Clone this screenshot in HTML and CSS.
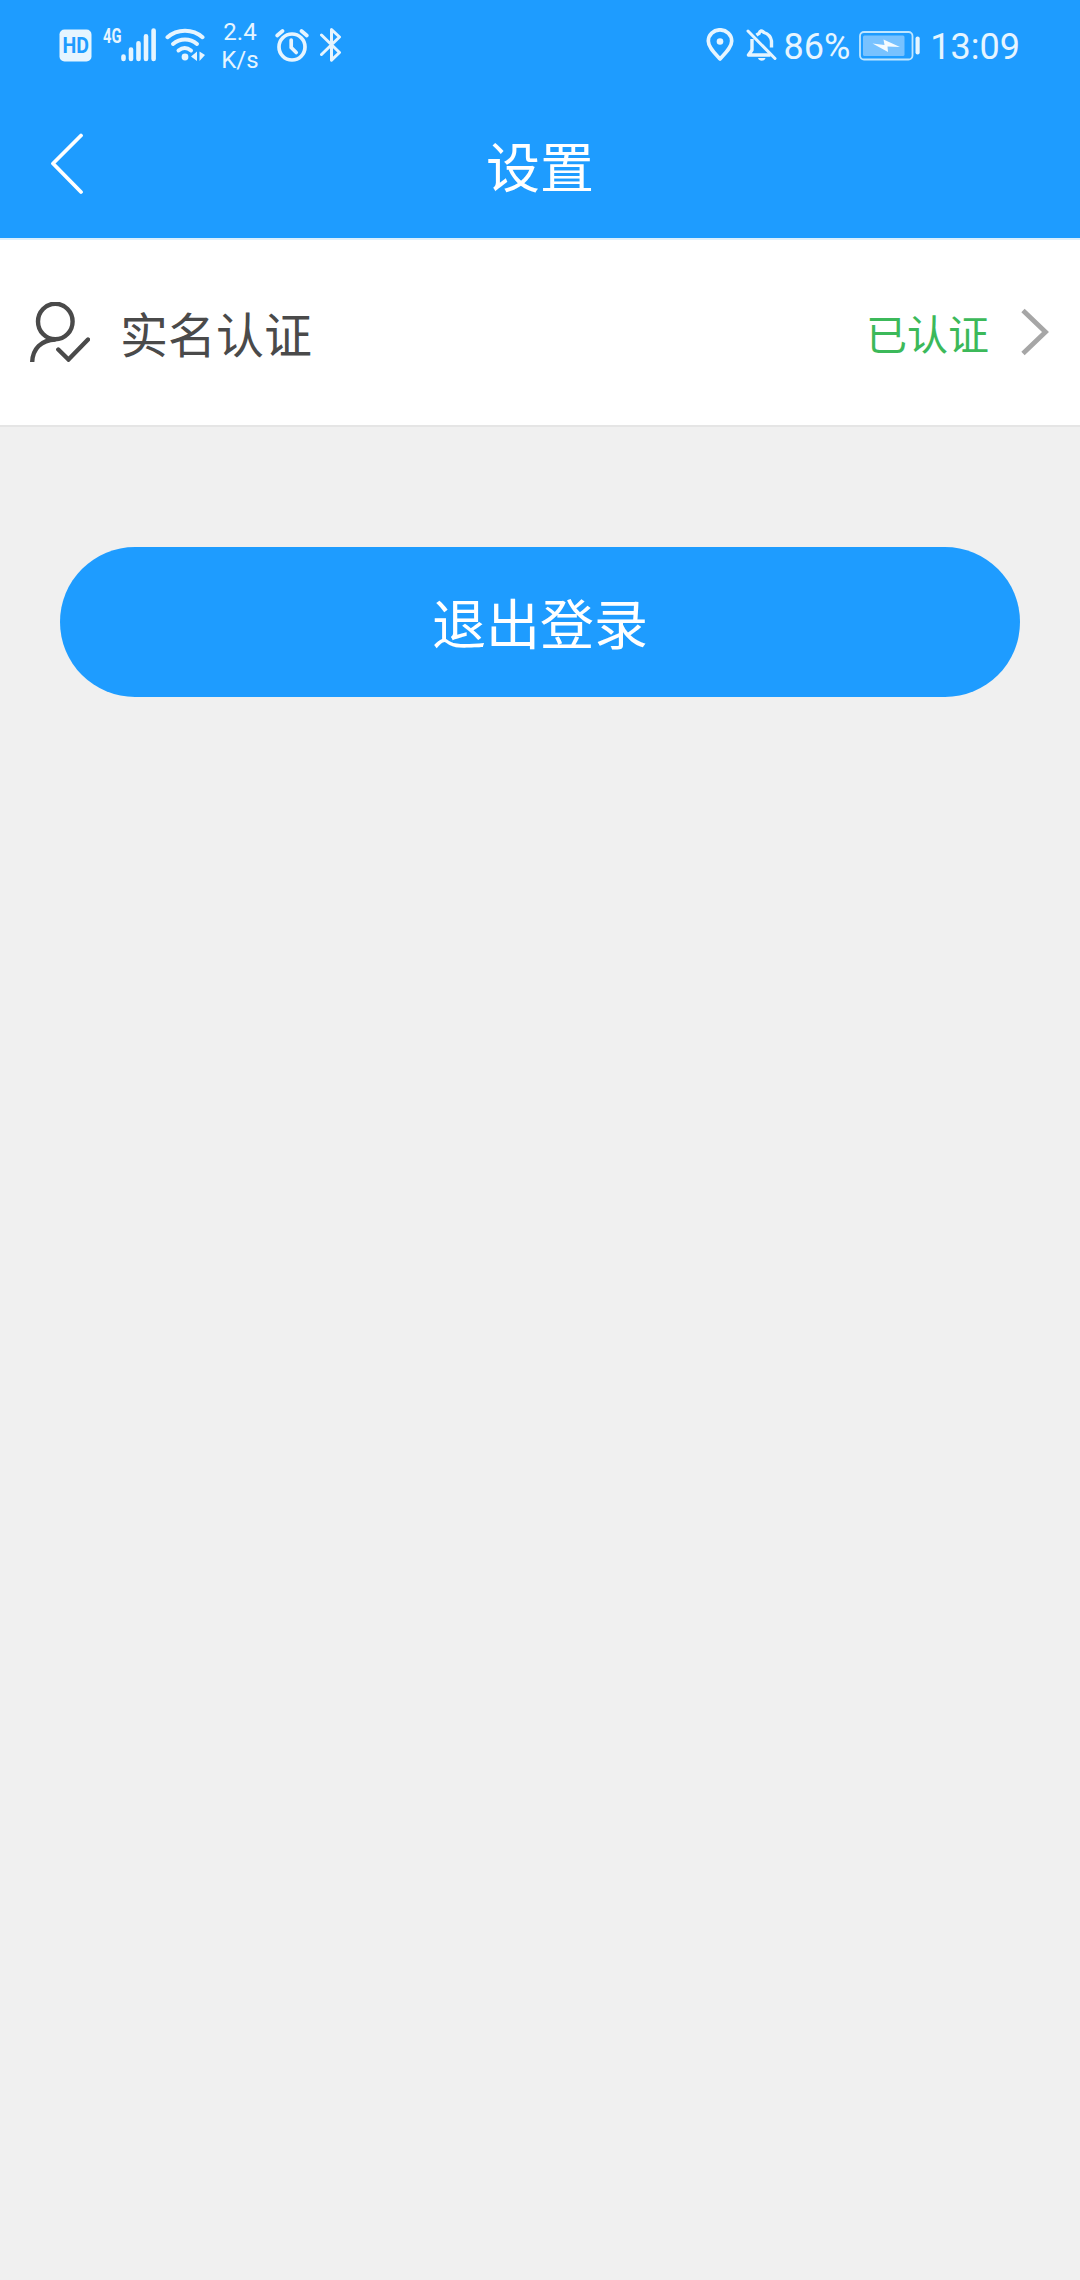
FILE: index.html
```
<!DOCTYPE html>
<html lang="zh-CN">
<head>
    <meta charset="UTF-8">
    <meta name="viewport" content="width=device-width, initial-scale=1.0">
    <title>设置</title>
    <link rel="stylesheet" href="styles.css">
</head>
<body>
    <header class="header">
        <div class="status-bar">
            <div class="status-left">
                <svg class="icon-hd" width="33" height="33" viewBox="0 0 33 33">
                    <rect x="0.5" y="0.5" width="32" height="32" rx="5" fill="#e6f5ff"/>
                    <text x="3.5" y="24" textLength="26.5" lengthAdjust="spacingAndGlyphs" class="hd-text">HD</text>
                </svg>
                <svg class="icon-signal" width="54" height="54" viewBox="0 -10 54 54">
                    <text x="0" y="14.5" textLength="18.5" lengthAdjust="spacingAndGlyphs" class="net-text">4G</text>
                    <g fill="none" stroke="#e6f5ff" stroke-width="4.6" stroke-linecap="round">
                        <path d="M20.5 28.5v2.5M28 21.5V31M35.5 15.2V31M43 8.2V31M50.6 2.5V31"/>
                    </g>
                </svg>
                <svg class="icon-wifi" width="40" height="34" viewBox="0 0 40 34">
                    <g fill="none" stroke="#e6f5ff" stroke-width="4" stroke-linecap="round">
                        <path d="M2.5 9.2C12 0.5 28 0.5 37.5 9.2"/>
                        <path d="M8 16C15 10 25 10 32 16"/>
                        <path d="M13.5 22.5C17.5 19.3 22 19.3 26 22.5"/>
                    </g>
                    <circle cx="20" cy="29" r="3.4" fill="#e6f5ff"/>
                    <path d="M26 28.5l6-5v9.5zM34.5 23.5l5.5 3.5-5.5 6z" fill="#e6f5ff"/>
                </svg>
                <div class="net-speed">
                    <span>2.4</span>
                    <span>K/s</span>
                </div>
                <svg class="icon-alarm" width="34" height="34" viewBox="0 0 34 34">
                    <g fill="none" stroke="#e6f5ff" stroke-width="3.7">
                        <circle cx="17" cy="19" r="13"/>
                        <path d="M2.2 7.5L7.5 3M26.5 3L31.8 7.5" stroke-linecap="round"/>
                        <path d="M16.2 12v7.5l5 5" stroke-linecap="round"/>
                    </g>
                </svg>
                <svg class="icon-bluetooth" width="22" height="36" viewBox="0 0 22 36">
                    <path d="M1.5 8L19.5 25.5L11.5 33.2V2.5L19.5 10L1.5 27.5" fill="none" stroke="#e6f5ff" stroke-width="3" stroke-linecap="round" stroke-linejoin="round"/>
                </svg>
            </div>
            <div class="status-right">
                <svg class="icon-pin" width="28" height="34" viewBox="0 0 28 34">
                    <path d="M14 31C9 25.5 2.3 19.5 2.3 13a11.7 11.2 0 0 1 23.4 0C25.7 19.5 19 25.5 14 31z" fill="none" stroke="#e6f5ff" stroke-width="3.7" stroke-linejoin="round"/>
                    <circle cx="14" cy="13.5" r="3.3" fill="#e6f5ff"/>
                </svg>
                <svg class="icon-bell" width="32" height="34" viewBox="0 0 32 34">
                    <g fill="none" stroke="#e6f5ff" stroke-width="3.4">
                        <path d="M2 3L29 30.5" stroke-linecap="round" stroke-width="3"/>
                        <path d="M6 11V22L2.5 27H24.5" stroke-linejoin="round"/>
                        <path d="M10.5 7.2Q12 6 13 5.5Q14.5 1 18 4.5Q24.5 6.5 25.5 13V19.5"/>
                    </g>
                    <path d="M12 30h7.5c-1 3.7-6.5 3.7-7.5 0z" fill="#e6f5ff"/>
                </svg>
                <span class="battery-level">86%</span>
                <svg class="icon-battery" width="62" height="30" viewBox="0 0 62 30">
                    <rect x="1" y="1" width="52.5" height="27.5" rx="4" fill="none" stroke="#bfe6ff" stroke-width="1.8"/>
                    <rect x="4" y="4.5" width="41.5" height="20.5" rx="1.5" fill="#78c2ff"/>
                    <path d="M13.5 12.5l12 1.5-1-5.5 16.5 7.5-12.5-.5.5 5.5z" fill="#f4fbff"/>
                    <rect x="56.5" y="5.5" width="4.2" height="18" rx="2" fill="#e6f5ff"/>
                </svg>
                <span class="clock">13:09</span>
            </div>
        </div>
        <nav class="nav-bar">
            <a href="#" class="back" aria-label="返回">
                <svg width="34" height="62" viewBox="0 0 34 62">
                    <path d="M31 2.5L3 30.5L31 59" fill="none" stroke="#fff" stroke-width="3.8" stroke-linecap="round" stroke-linejoin="round"/>
                </svg>
            </a>
            <h1 class="title">设置</h1>
        </nav>
    </header>

    <main>
        <a href="#" class="cell">
            <svg class="cell-icon" width="60" height="60" viewBox="0 0 60 60">
                <g fill="none" stroke="#4a4a4a" stroke-width="4.4">
                    <ellipse cx="25.3" cy="19.5" rx="17.3" ry="17.8"/>
                    <path d="M2.2 60C2.7 47 11 38 25.5 37.5"/>
                    <path d="M28.3 47.5L38.5 57.5L58 37.5" stroke-linecap="round"/>
                </g>
            </svg>
            <span class="cell-label">实名认证</span>
            <span class="cell-value">已认证</span>
            <svg class="cell-arrow" width="28" height="48" viewBox="0 0 28 48">
                <path d="M2 2.5L24.5 24L2 45.5" fill="none" stroke="#a6a6a6" stroke-width="4.8"/>
            </svg>
        </a>
        <button class="logout" type="button">退出登录</button>
    </main>
</body>
</html>
```

FILE: styles.css
```
* {
    margin: 0;
    padding: 0;
    box-sizing: border-box;
}

body {
    font-family: Roboto, 'Noto Sans CJK SC', sans-serif;
    background: #f0f0f0;
    min-height: 100vh;
    overflow-x: hidden;
}

svg {
    display: block;
    flex-shrink: 0;
}

a {
    color: inherit;
    text-decoration: none;
}

.header {
    height: 240px;
    background: #1e9cff;
    border-bottom: 2px solid #dceffd;
    color: #fff;
}

/* status bar */
.status-bar {
    display: flex;
    justify-content: space-between;
    height: 90px;
    padding: 0 60px 0 59px;
    color: #e6f5ff;
}

.status-left,
.status-right {
    display: flex;
    align-items: center;
}

.hd-text {
    font: 700 22px Roboto, sans-serif;
    fill: #1e9cff;
}

.net-text {
    font: 700 20px Roboto, sans-serif;
    fill: #e6f5ff;
}

.icon-signal {
    margin-left: 11px;
}

.icon-wifi {
    margin-left: 8px;
}

.net-speed {
    display: flex;
    flex-direction: column;
    width: 38px;
    margin: 2px 0 0 16px;
    font-size: 24px;
    line-height: 28px;
    text-align: center;
}

.icon-alarm {
    margin-left: 16px;
}

.icon-bluetooth {
    margin-left: 11px;
}

.icon-bell {
    margin-left: 12px;
}

.battery-level,
.clock {
    font-size: 36px;
    line-height: 42px;
    margin-top: 3px;
}

.battery-level {
    margin-left: 6px;
}

.icon-battery {
    margin: 1px 0 0 9px;
}

.clock {
    margin-left: 9px;
}

/* title bar */
.nav-bar {
    display: grid;
    grid-template-columns: 150px 1fr 150px;
    height: 148px;
}

.back {
    padding: 43px 0 0 50px;
}

.title {
    padding-top: 40px;
    font-size: 54px;
    font-weight: 400;
    line-height: 80px;
    text-align: center;
}

/* list row */
.cell {
    display: flex;
    align-items: center;
    height: 187px;
    padding: 0 31px 0 30px;
    background: #fff;
    border-bottom: 2px solid #e5e5e5;
}

.cell-icon,
.cell-arrow {
    margin-bottom: 2px;
}

.cell-label {
    flex: 1;
    margin: 8px 0 0 30px;
    font-size: 48px;
    line-height: 70px;
    color: #4a4a4a;
}

.cell-value {
    margin: 7px 32px 0 0;
    font-size: 41px;
    line-height: 60px;
    color: #3cb95a;
}

.logout {
    display: block;
    width: 960px;
    height: 150px;
    margin: 120px auto 0;
    padding-bottom: 2px;
    border: none;
    border-radius: 75px;
    background: #1e9cff;
    color: #fff;
    font-family: inherit;
    font-size: 54px;
}
```
